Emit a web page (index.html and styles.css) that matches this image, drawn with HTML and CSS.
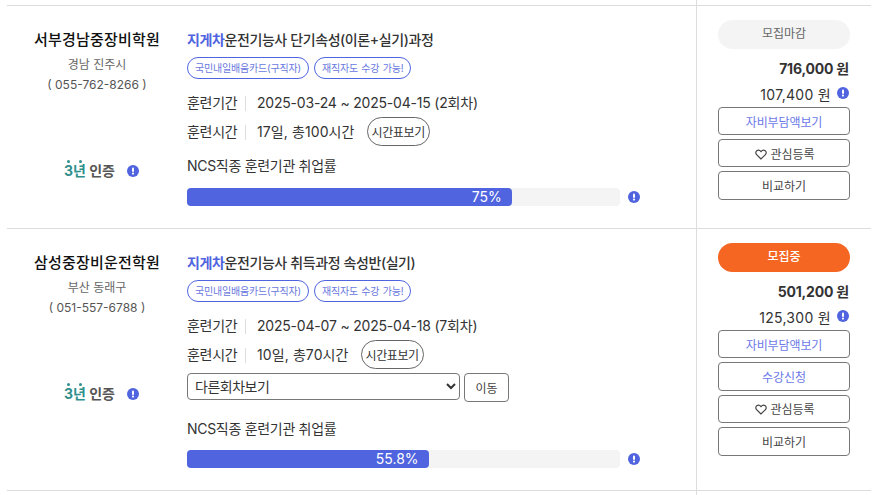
FILE: index.html
```html
<!DOCTYPE html>
<html lang="ko">
<head>
<meta charset="utf-8">
<title>훈련과정 목록</title>
<link rel="stylesheet" href="styles.css">
</head>
<body>
<svg class="defs" width="0" height="0" aria-hidden="true">
  <symbol id="info" viewBox="0 0 12 12">
    <circle cx="6" cy="6" r="6" fill="#4f64de"/>
    <rect x="5" y="2.6" width="2" height="4.4" rx="1" fill="#fff"/>
    <circle cx="6" cy="8.6" r="1.05" fill="#fff"/>
  </symbol>
  <symbol id="heart" viewBox="0 0 12 11">
    <path d="M6 10 1.6 5.6C.4 4.4.6 2.6 1.8 1.7 3 .9 4.8 1.1 6 2.6 7.2 1.1 9 .9 10.200 1.700 11.400 2.600 11.600 4.400 10.400 5.600Z" fill="none" stroke="#444" stroke-width="1.200"/>
  </symbol>
</svg>
<main class="list">
  <div class="row stub stub-top"><div class="stub-main"></div><div class="stub-side"></div></div>

  <article class="row course">
    <section class="org">
      <h2 class="org-name">서부경남중장비학원</h2>
      <p class="org-place">경남 진주시</p>
      <p class="org-tel">( 055-762-8266 )</p>
      <div class="cert">
        <span class="cert-logo"><span class="cert-year">3년<i class="dot dot-a"></i><i class="dot dot-b"></i></span> 인증</span>
        <svg class="info cert-info"><use href="#info"/></svg>
      </div>
    </section>
    <section class="detail">
      <h3 class="title"><span class="title-key">지게차</span>운전기능사 단기속성(이론+실기)과정</h3>
      <div class="tags"><span class="tag">국민내일배움카드(구직자)</span><span class="tag">재직자도 수강 가능!</span></div>
      <dl class="facts">
        <div class="fact"><dt>훈련기간</dt><dd class="dates">2025-03-24 ~ 2025-04-15 (2회차)</dd></div>
        <div class="fact"><dt>훈련시간</dt><dd class="hours">17일, 총100시간</dd><button class="pill-btn">시간표보기</button></div>
      </dl>
      <p class="rate-label">NCS직종 훈련기관 취업률</p>
      <div class="rate">
        <div class="bar"><div class="bar-fill" style="width:75%">75%</div></div>
        <svg class="info"><use href="#info"/></svg>
      </div>
    </section>
    <aside class="side">
      <div class="status closed">모집마감</div>
      <p class="price">716,000 원</p>
      <p class="copay">107,400 원<svg class="info copay-info"><use href="#info"/></svg></p>
      <div class="actions">
        <button class="act link">자비부담액보기</button>
        <button class="act"><svg class="heart"><use href="#heart"/></svg>관심등록</button>
        <button class="act">비교하기</button>
      </div>
    </aside>
  </article>

  <article class="row course">
    <section class="org org-b">
      <h2 class="org-name">삼성중장비운전학원</h2>
      <p class="org-place">부산 동래구</p>
      <p class="org-tel">( 051-557-6788 )</p>
      <div class="cert">
        <span class="cert-logo"><span class="cert-year">3년<i class="dot dot-a"></i><i class="dot dot-b"></i></span> 인증</span>
        <svg class="info cert-info"><use href="#info"/></svg>
      </div>
    </section>
    <section class="detail detail-b">
      <h3 class="title"><span class="title-key">지게차</span>운전기능사 취득과정 속성반(실기)</h3>
      <div class="tags"><span class="tag">국민내일배움카드(구직자)</span><span class="tag">재직자도 수강 가능!</span></div>
      <dl class="facts">
        <div class="fact"><dt>훈련기간</dt><dd class="dates">2025-04-07 ~ 2025-04-18 (7회차)</dd></div>
        <div class="fact"><dt>훈련시간</dt><dd class="hours">10일, 총70시간</dd><button class="pill-btn">시간표보기</button></div>
      </dl>
      <div class="rounds">
        <select class="round-select"><option>다른회차보기</option></select>
        <button class="go">이동</button>
      </div>
      <p class="rate-label rate-label-b">NCS직종 훈련기관 취업률</p>
      <div class="rate">
        <div class="bar"><div class="bar-fill" style="width:55.8%">55.8%</div></div>
        <svg class="info"><use href="#info"/></svg>
      </div>
    </section>
    <aside class="side side-b">
      <div class="status open">모집중</div>
      <p class="price">501,200 원</p>
      <p class="copay">125,300 원<svg class="info copay-info"><use href="#info"/></svg></p>
      <div class="actions">
        <button class="act link">자비부담액보기</button>
        <button class="act link">수강신청</button>
        <button class="act"><svg class="heart"><use href="#heart"/></svg>관심등록</button>
        <button class="act">비교하기</button>
      </div>
    </aside>
  </article>

  <div class="row stub stub-bottom"><div class="stub-main"></div><div class="stub-side"></div></div>
</main>
</body>
</html>
```
FILE: styles.css
```css
* { box-sizing: border-box; }
html, body { margin: 0; padding: 0; background: #fff; overflow: hidden; }
body {
  font-family: Inter, "Noto Sans CJK KR", "Noto Sans", sans-serif;
  font-size: 14px;
  color: #333;
}
.defs { position: absolute; }
h2, h3, p, dl, dd { margin: 0; }
button, select { font-family: inherit; }

.list { margin: 0 3px 0 7px; }
.row { display: flex; }
.stub-main { width: 689px; }
.stub-side { flex: 1; border-left: 1px solid #dcdcdc; }
.stub-top { height: 5px; }
.stub-bottom { height: 5px; border-top: 1px solid #dcdcdc; }
.course { border-top: 1px solid #dcdcdc; }
.course:nth-of-type(1) { height: 223px; }
.course { height: 262px; }

.org { width: 180px; flex: none; text-align: center; padding-top: 24px; }
.org-name { font-size: 15px; line-height: 20px; font-weight: 500; color: #111; letter-spacing: .2px; }
.org-place { font-size: 12px; line-height: 18px; margin-top: 6px; color: #666; }
.org-tel { font-size: 12px; line-height: 18px; margin-top: 2px; color: #555; }
.cert { display: flex; align-items: center; justify-content: center; margin-top: 67px; gap: 12px; padding-left: 9px; }
.cert-logo { font-size: 14px; font-weight: 700; color: #555; line-height: 20px; }
.cert-year { color: #2f8f8c; position: relative; }
.dot { position: absolute; top: -2px; width: 3px; height: 3px; border-radius: 50%; background: #2f8f8c; }
.dot-a { left: 3px; }
.dot-b { left: 15px; }
.info { width: 12px; height: 12px; flex: none; display: block; }

.detail { width: 509px; flex: none; padding-top: 24px; }
.title { font-size: 14px; line-height: 20px; font-weight: 500; color: #333; letter-spacing: -.4px; }
.title-key { color: #4f64de; font-weight: 700; }
.tags { display: flex; gap: 5px; margin-top: 7px; }
.tag {
  height: 22px; line-height: 20px; padding: 0 7px;
  border: 1px solid #4f64de; border-radius: 11px;
  font-size: 10px; letter-spacing: -.2px; word-spacing: .8px; color: #6a78e0;
}
.facts { margin-top: 9px; }
.fact { display: flex; align-items: center; height: 29px; }
.fact dt { width: 50px; white-space: nowrap; line-height: 18px; letter-spacing: -.3px; }
.fact dd { margin-left: 8px; padding-left: 12px; position: relative; line-height: 18px; }
.fact dd::before { content: ""; position: absolute; left: 0; top: 2px; height: 15px; border-left: 1px solid #ddd; }
.dates { letter-spacing: -.2px; }
.hours { letter-spacing: .1px; }
.pill-btn {
  height: 29px; margin-left: 12px; padding: 0 4px;
  border: 1px solid #666; border-radius: 15px; background: #fff;
  font-size: 12px; letter-spacing: -.4px; color: #333;
}
.rate-label { margin-top: 10px; line-height: 20px; letter-spacing: -.3px; }
.rate { display: flex; align-items: center; gap: 8px; margin-top: 12px; }
.detail-b .rate { margin-top: 11px; }
.bar { width: 433px; height: 18px; background: #f4f4f4; border-radius: 4px; }
.bar-fill {
  height: 18px; line-height: 18px; padding-right: 10px; text-align: right;
  background: #4f64de; border-radius: 4px; color: #fff; font-size: 14px;
}
.rounds { display: flex; align-items: flex-start; gap: 4px; margin-top: 4px; }
.round-select {
  width: 273px; height: 27px; padding-left: 3px;
  border: 1px solid #777; border-radius: 4px; background: #fff;
  font-size: 14px; letter-spacing: -.5px; color: #333;
}
.go {
  width: 45px; height: 29px; padding: 0;
  border: 1px solid #777; border-radius: 4px; background: #fff;
  font-size: 12px; color: #444;
}
.rate-label-b { margin-top: 17px; }

.side { flex: 1; border-left: 1px solid #dcdcdc; padding: 14px 21px 0 21px; }
.status { width: 132px; height: 29px; line-height: 28px; text-align: center; border-radius: 15px; font-size: 12px; }
.closed { background: #f4f4f4; color: #666; }
.open { background: #f46622; color: #fff; font-weight: 500; }
.price { width: 132px; text-align: right; font-weight: 700; line-height: 20px; margin-top: 10px; color: #333; padding-right: 1px; letter-spacing: -.2px; }
.copay { width: 132px; display: flex; justify-content: flex-end; align-items: flex-start; line-height: 20px; margin-top: 6px; gap: 6px; padding-right: 1px; letter-spacing: .3px; }
.copay-info { margin-top: 2px; }
.actions { display: flex; flex-direction: column; gap: 4px; width: 132px; margin-top: 2px; }
.act {
  height: 28.2px; padding: 0;
  border: 1px solid #777; border-radius: 4px; background: #fff;
  font-size: 12px; letter-spacing: -.1px; color: #444;
}
.side-b .act { height: 28.4px; }
.link { color: #6a78e8; }
.heart { width: 12px; height: 11px; margin-right: 4px; margin-left: 1px; vertical-align: -1px; }
```
